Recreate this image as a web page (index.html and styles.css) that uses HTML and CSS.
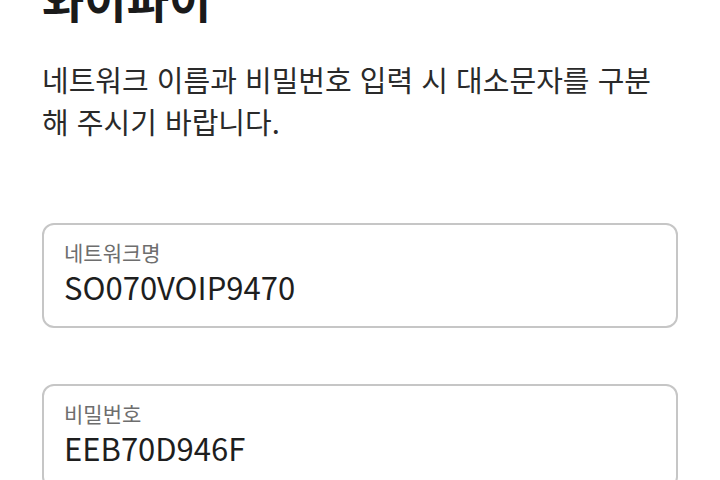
FILE: index.html
```html
<!DOCTYPE html>
<html lang="ko">
<head>
<meta charset="utf-8">
<link rel="stylesheet" href="styles.css">
</head>
<body>
<main class="page">
  <h1 class="title">와이파이</h1>
  <p class="desc">네트워크 이름과 비밀번호 입력 시 대소문자를 구분<br>해 주시기 바랍니다.</p>
  <div class="field">
    <div class="label">네트워크명</div>
    <div class="value">SO070VOIP9470</div>
  </div>
  <div class="field">
    <div class="label">비밀번호</div>
    <div class="value">EEB70D946F</div>
  </div>
</main>
</body>
</html>
```
FILE: styles.css
```css
html, body {
  margin: 0;
  padding: 0;
  background: #fff;
  overflow: hidden;
}
.page {
  padding: 0 42px;
  font-family: "Noto Sans CJK KR", "Noto Sans", sans-serif;
  color: #222;
}
.title {
  margin: -32px 0 0;
  font-size: 46px;
  line-height: 60px;
  font-weight: 700;
  color: #1a1a1a;
}
.desc {
  margin: 30px 0 0;
  font-size: 29px;
  line-height: 42px;
  color: #2a2a2a;
}
.field {
  box-sizing: border-box;
  margin-top: 81px;
  border: 2px solid #c6c6c6;
  border-radius: 12px;
  padding: 14px 20px 17px;
  height: 105px;
}
.field + .field {
  margin-top: 56px;
}
.label {
  font-size: 21px;
  line-height: 26px;
  color: #6e6e6e;
}
.value {
  font-size: 31px;
  line-height: 44px;
  color: #1e1e1e;
}
```
